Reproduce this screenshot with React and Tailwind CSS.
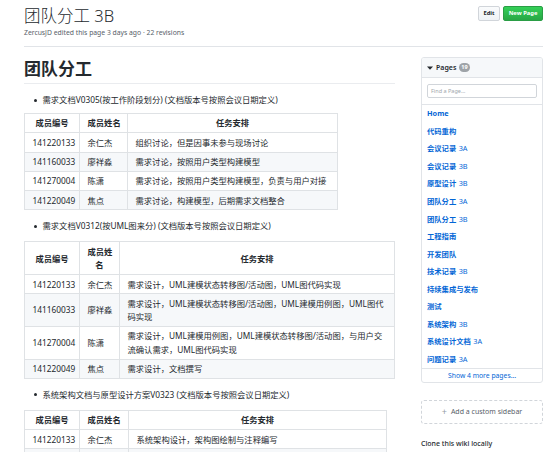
import React from "react";

const cell = "border border-[#dfe2e5] px-[7.5px] py-[2.5px] leading-[13.3px]";

function Table({ widthClass, colClasses, headers, rows }) {
  return (
    <table className={`border-collapse table-fixed text-[8.3px] text-[#24292e] ${widthClass}`}>
      <colgroup>
        {colClasses.map((c, i) => (
          <col key={i} className={c} />
        ))}
      </colgroup>
      <thead>
        <tr className="bg-white">
          {headers.map((h, i) => (
            <th key={i} className={`${cell} font-bold text-center whitespace-nowrap`}>
              {h}
            </th>
          ))}
        </tr>
      </thead>
      <tbody>
        {rows.map((r, i) => (
          <tr key={i} className={i % 2 === 1 ? "bg-[#f6f8fa]" : "bg-white"}>
            {r.map((c, j) => (
              <td key={j} className={`${cell} text-left whitespace-nowrap`}>
                {c === "" ? "\u00a0" : c}
              </td>
            ))}
          </tr>
        ))}
      </tbody>
    </table>
  );
}

function Bullet({ children, className }) {
  return (
    <div className={`flex items-center text-[8.3px] leading-[13.3px] text-[#24292e] ${className}`}>
      <span className="ml-[9.5px] mr-[6px] w-[3px] h-[3px] rounded-full bg-[#24292e] shrink-0" />
      <span className="whitespace-nowrap">{children}</span>
    </div>
  );
}

const pages = [
  ["Home", ""],
  ["代码重构", ""],
  ["会议记录", "3A"],
  ["会议记录", "3B"],
  ["原型设计", "3B"],
  ["团队分工", "3A"],
  ["团队分工", "3B"],
  ["工程指南", ""],
  ["开发团队", ""],
  ["技术记录", "3B"],
  ["持续集成与发布", ""],
  ["测试", ""],
  ["系统架构", "3B"],
  ["系统设计文档", "3A"],
  ["问题记录", "3A"],
];

export default function App() {
  return (
    <div className="w-[552px] h-[452px] overflow-hidden bg-white text-[#24292e] font-['Noto_Sans','Noto_Sans_CJK_SC',sans-serif]">
      <div className="ml-[24px] mr-[9px]">
        {/* header */}
        <div className="flex justify-between h-[47px] border-b border-[#e1e4e8]">
          <div className="pt-[5px]">
            <div className="text-[16.5px] leading-[22px] font-light text-[#24292e] whitespace-nowrap">团队分工 3B</div>
            <div className="mt-[1px] text-[6.8px] leading-[10px] text-[#586069] whitespace-nowrap">
              ZercusJD edited this page 3 days ago · 22 revisions
            </div>
          </div>
          <div className="flex items-start gap-[3px] pt-[6px]">
            <div className="h-[15px] w-[22px] flex items-center justify-center rounded-[2px] border border-[#d1d5da] bg-gradient-to-b from-[#fafbfc] to-[#eff3f6] text-[5.8px] font-bold text-[#24292e]">
              Edit
            </div>
            <div className="h-[15px] w-[40px] flex items-center justify-center rounded-[2px] border border-[#2a9d45] bg-gradient-to-b from-[#34d058] to-[#28a745] text-[5.8px] font-bold text-white">
              New Page
            </div>
          </div>
        </div>

        <div className="flex gap-[26px]">
          {/* main */}
          <div className="w-[371px] shrink-0">
            <div className="mt-[10px] pb-[2px] border-b border-[#eaecef] text-[17px] leading-[24px] font-bold text-[#24292e]">
              团队分工
            </div>

            <Bullet className="mt-[9.4px] mb-[6.3px]">需求文档V0305(按工作阶段划分) (文档版本号按照会议日期定义)</Bullet>
            <Table
              widthClass="w-[313px]"
              colClasses={["w-[55px]", "w-[48px]", "w-[210px]"]}
              headers={["成员编号", "成员姓名", "任务安排"]}
              rows={[
                ["141220133", "余仁杰", "组织讨论，但是因事未参与现场讨论"],
                ["141160033", "廖祥淼", "需求讨论，按照用户类型构建模型"],
                ["141270004", "陈潇", "需求讨论，按照用户类型构建模型，负责与用户对接"],
                ["141220049", "焦点", "需求讨论，构建模型，后期需求文档整合"],
              ]}
            />

            <Bullet className="mt-[9px] mb-[8.7px]">需求文档V0312(按UML图来分) (文档版本号按照会议日期定义)</Bullet>
            <Table
              widthClass="w-[370px]"
              colClasses={["w-[55px]", "w-[40px]", "w-[275px]"]}
              headers={[
                "成员编号",
                <>
                  成员姓
                  <br />名
                </>,
                "任务安排",
              ]}
              rows={[
                ["141220133", "余仁杰", "需求设计，UML建模状态转移图/活动图，UML图代码实现"],
                [
                  "141160033",
                  "廖祥淼",
                  <>
                    需求设计，UML建模状态转移图/活动图，UML建模用例图，UML图代
                    <br />
                    码实现
                  </>,
                ],
                [
                  "141270004",
                  "陈潇",
                  <>
                    需求设计，UML建模用例图，UML建模状态转移图/活动图，与用户交
                    <br />
                    流确认需求，UML图代码实现
                  </>,
                ],
                ["141220049", "焦点", "需求设计，文档撰写"],
              ]}
            />

            <Bullet className="mt-[9px] mb-[8.7px]">系统架构文档与原型设计方案V0323 (文档版本号按照会议日期定义)</Bullet>
            <Table
              widthClass="w-[362px]"
              colClasses={["w-[55px]", "w-[49px]", "w-[258px]"]}
              headers={["成员编号", "成员姓名", "任务安排"]}
              rows={[
                ["141220133", "余仁杰", "系统架构设计，架构图绘制与注释编写"],
                ["", "", ""],
              ]}
            />
          </div>

          {/* sidebar */}
          <div className="w-[122px] shrink-0 mt-[10px]">
            <div className="border border-[#e1e4e8] rounded-[3px] overflow-hidden">
              <div className="h-[20px] flex items-center px-[5px] bg-[#f6f8fa] border-b border-[#e1e4e8]">
                <svg width="6" height="4" viewBox="0 0 6 4" className="mr-[3px]">
                  <path d="M0 0.5 L6 0.5 L3 3.8 Z" fill="#24292e" />
                </svg>
                <span className="text-[7px] leading-[10px] font-semibold text-[#24292e]">Pages</span>
                <span className="ml-[3px] h-[9px] min-w-[10px] px-[2px] rounded-full bg-[#9ea3a8] text-white text-[5.5px] leading-[9px] font-bold text-center">
                  19
                </span>
              </div>
              <div className="px-[5px] pt-[6px] pb-[6px] border-b border-[#e1e4e8]">
                <div className="h-[14px] border border-[#d1d5da] rounded-[2px] bg-white flex items-center px-[3px] text-[5.5px] text-[#a0a6ac]">
                  Find a Page…
                </div>
              </div>
              <div>
                {pages.map(([n, s], i) => (
                  <div key={i} className="h-[17.55px] flex items-center px-[5px] text-[7.3px] text-[#0366d6] whitespace-nowrap">
                    <span className="font-bold">{n}</span>
                    {s && <span className="ml-[2.5px] font-normal">{s}</span>}
                  </div>
                ))}
              </div>
              <div className="h-[14px] border-t border-[#e1e4e8] flex items-center justify-center text-[6.8px] text-[#0366d6]">
                Show 4 more pages…
              </div>
            </div>

            <div className="mt-[17px] h-[24px] border border-dashed border-[#d1d5da] rounded-[3px] flex items-center justify-center text-[7px] text-[#586069] whitespace-nowrap">
              <span className="mr-[4px] text-[#959da5] text-[9px] leading-[10px]">+</span>
              Add a custom sidebar
            </div>

            <div className="mt-[15px] text-[7px] leading-[10px] font-medium text-[#24292e] whitespace-nowrap">
              Clone this wiki locally
            </div>
          </div>
        </div>
      </div>
    </div>
  );
}
